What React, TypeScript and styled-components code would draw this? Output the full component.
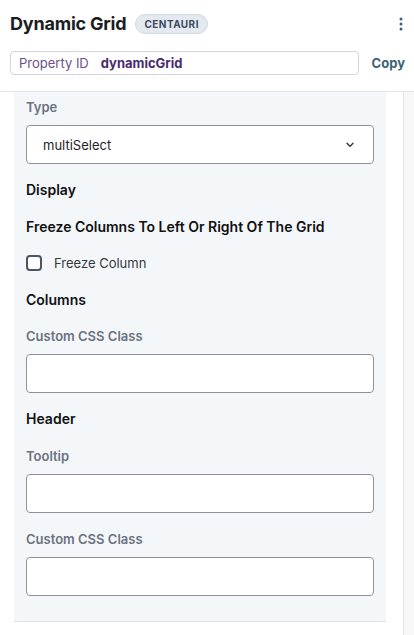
import React from "react";
import styled, { createGlobalStyle } from "styled-components";

const Global = createGlobalStyle`
  html, body { margin: 0; padding: 0; background: #ffffff; }
  body { font-family: Inter, "Noto Sans", "Liberation Sans", sans-serif; color: #111111; -webkit-font-smoothing: antialiased; }
  * { box-sizing: border-box; }
`;

const Page = styled.div`
  width: 414px;
  height: 635px;
  display: flex;
  flex-direction: column;
  overflow: hidden;
  background: #fff;
`;

const TopBar = styled.header`
  display: flex;
  align-items: center;
  height: 48px;
  padding: 0 10px 0 10px;
  gap: 9px;
`;

const Title = styled.h1`
  margin: 0;
  font-size: 18px;
  font-weight: 700;
  letter-spacing: -0.2px;
  color: #1a1d21;
  line-height: 24px;
`;

const Badge = styled.span`
  display: inline-flex;
  align-items: center;
  height: 20px;
  padding: 0 8px;
  border-radius: 10px;
  background: #e4e9f0;
  border: 1px solid #d3dae3;
  color: #3d4a5c;
  font-size: 10px;
  font-weight: 700;
  letter-spacing: 0.45px;
`;

const Spacer = styled.div`
  flex: 1;
`;

const IconButton = styled.button`
  border: 0;
  background: transparent;
  padding: 0;
  width: 14px;
  height: 20px;
  display: flex;
  align-items: center;
  justify-content: center;
  margin-right: -4px;
  color: #3b6270;
`;

const IdRow = styled.div`
  display: flex;
  align-items: center;
  padding: 0 9px 0 10px;
  height: 30px;
  margin-bottom: 13px;
`;

const IdBox = styled.div`
  flex: 0 0 349px;
  height: 24px;
  border: 1px solid #d9cfe4;
  border-radius: 4px;
  display: flex;
  align-items: center;
  padding-left: 8px;
  gap: 12px;
  font-size: 13px;
`;

const IdLabel = styled.span`
  color: #6a4f8a;
`;

const IdValue = styled.span`
  color: #4a2a6e;
  font-weight: 700;
`;

const CopyButton = styled.button`
  margin-left: auto;
  border: 0;
  background: transparent;
  padding: 0;
  font-family: inherit;
  font-size: 13px;
  font-weight: 700;
  color: #3b6270;
`;

const Body = styled.div`
  flex: 1;
  display: flex;
  border-top: 1px solid #e2e6eb;
  min-height: 0;
`;

const Panel = styled.section`
  margin-left: 14px;
  width: 372px;
  height: 530px;
  background: #f4f7fa;
  border-bottom: 1px solid #dfe4ea;
  padding: 5px 12px 0 12px;
  display: flex;
  flex-direction: column;
  gap: 16.4px;
`;

const Track = styled.div`
  margin-left: auto;
  width: 11px;
  background: #f8f8f8;
  border-left: 1px solid #e4e4e4;
`;

const Field = styled.div`
  display: flex;
  flex-direction: column;
  gap: 8px;
`;

const Label = styled.label`
  font-size: 13px;
  line-height: 20px;
  font-weight: 600;
  color: #6b7280;
`;

const Heading = styled.h3`
  margin: 0;
  font-size: 14px;
  line-height: 20px;
  font-weight: 600;
  color: #111111;
`;

const Box = styled.div`
  height: 39px;
  background: #ffffff;
  border: 1px solid #8d929a;
  border-radius: 4px;
  display: flex;
  align-items: center;
  padding: 0 19px 0 16px;
  font-size: 13px;
  color: #1f2328;
`;

const SelectText = styled.span`
  flex: 1;
`;

const CheckRow = styled.label`
  display: flex;
  align-items: center;
  gap: 12px;
  height: 20px;
  font-size: 13px;
  color: #333740;
`;

const CheckBox = styled.span`
  width: 16px;
  height: 16px;
  border: 2px solid #4b5563;
  border-radius: 4px;
  background: #fff;
`;

const Chevron = () => (
  <svg width="8" height="6" viewBox="0 0 8 6" fill="none">
    <path d="M1 1.2 L4 4.4 L7 1.2" stroke="#2b2f36" strokeWidth="1.3" strokeLinecap="round" strokeLinejoin="round" />
  </svg>
);

const Kebab = () => (
  <svg width="4" height="14" viewBox="0 0 4 14" fill="#3b6270">
    <circle cx="2" cy="2" r="1.5" />
    <circle cx="2" cy="7" r="1.5" />
    <circle cx="2" cy="12" r="1.5" />
  </svg>
);

export default function App() {
  return (
    <Page>
      <Global />
      <TopBar>
        <Title>Dynamic Grid</Title>
        <Badge>CENTAURI</Badge>
        <Spacer />
        <IconButton aria-label="More">
          <Kebab />
        </IconButton>
      </TopBar>
      <IdRow>
        <IdBox>
          <IdLabel>Property ID</IdLabel>
          <IdValue>dynamicGrid</IdValue>
        </IdBox>
        <CopyButton>Copy</CopyButton>
      </IdRow>
      <Body>
        <Panel>
          <Field>
            <Label>Type</Label>
            <Box>
              <SelectText>multiSelect</SelectText>
              <Chevron />
            </Box>
          </Field>
          <Heading>Display</Heading>
          <Heading>Freeze Columns To Left Or Right Of The Grid</Heading>
          <CheckRow>
            <CheckBox />
            Freeze Column
          </CheckRow>
          <Heading>Columns</Heading>
          <Field>
            <Label>Custom CSS Class</Label>
            <Box />
          </Field>
          <Heading>Header</Heading>
          <Field>
            <Label>Tooltip</Label>
            <Box />
          </Field>
          <Field>
            <Label>Custom CSS Class</Label>
            <Box />
          </Field>
        </Panel>
        <Track />
      </Body>
    </Page>
  );
}
